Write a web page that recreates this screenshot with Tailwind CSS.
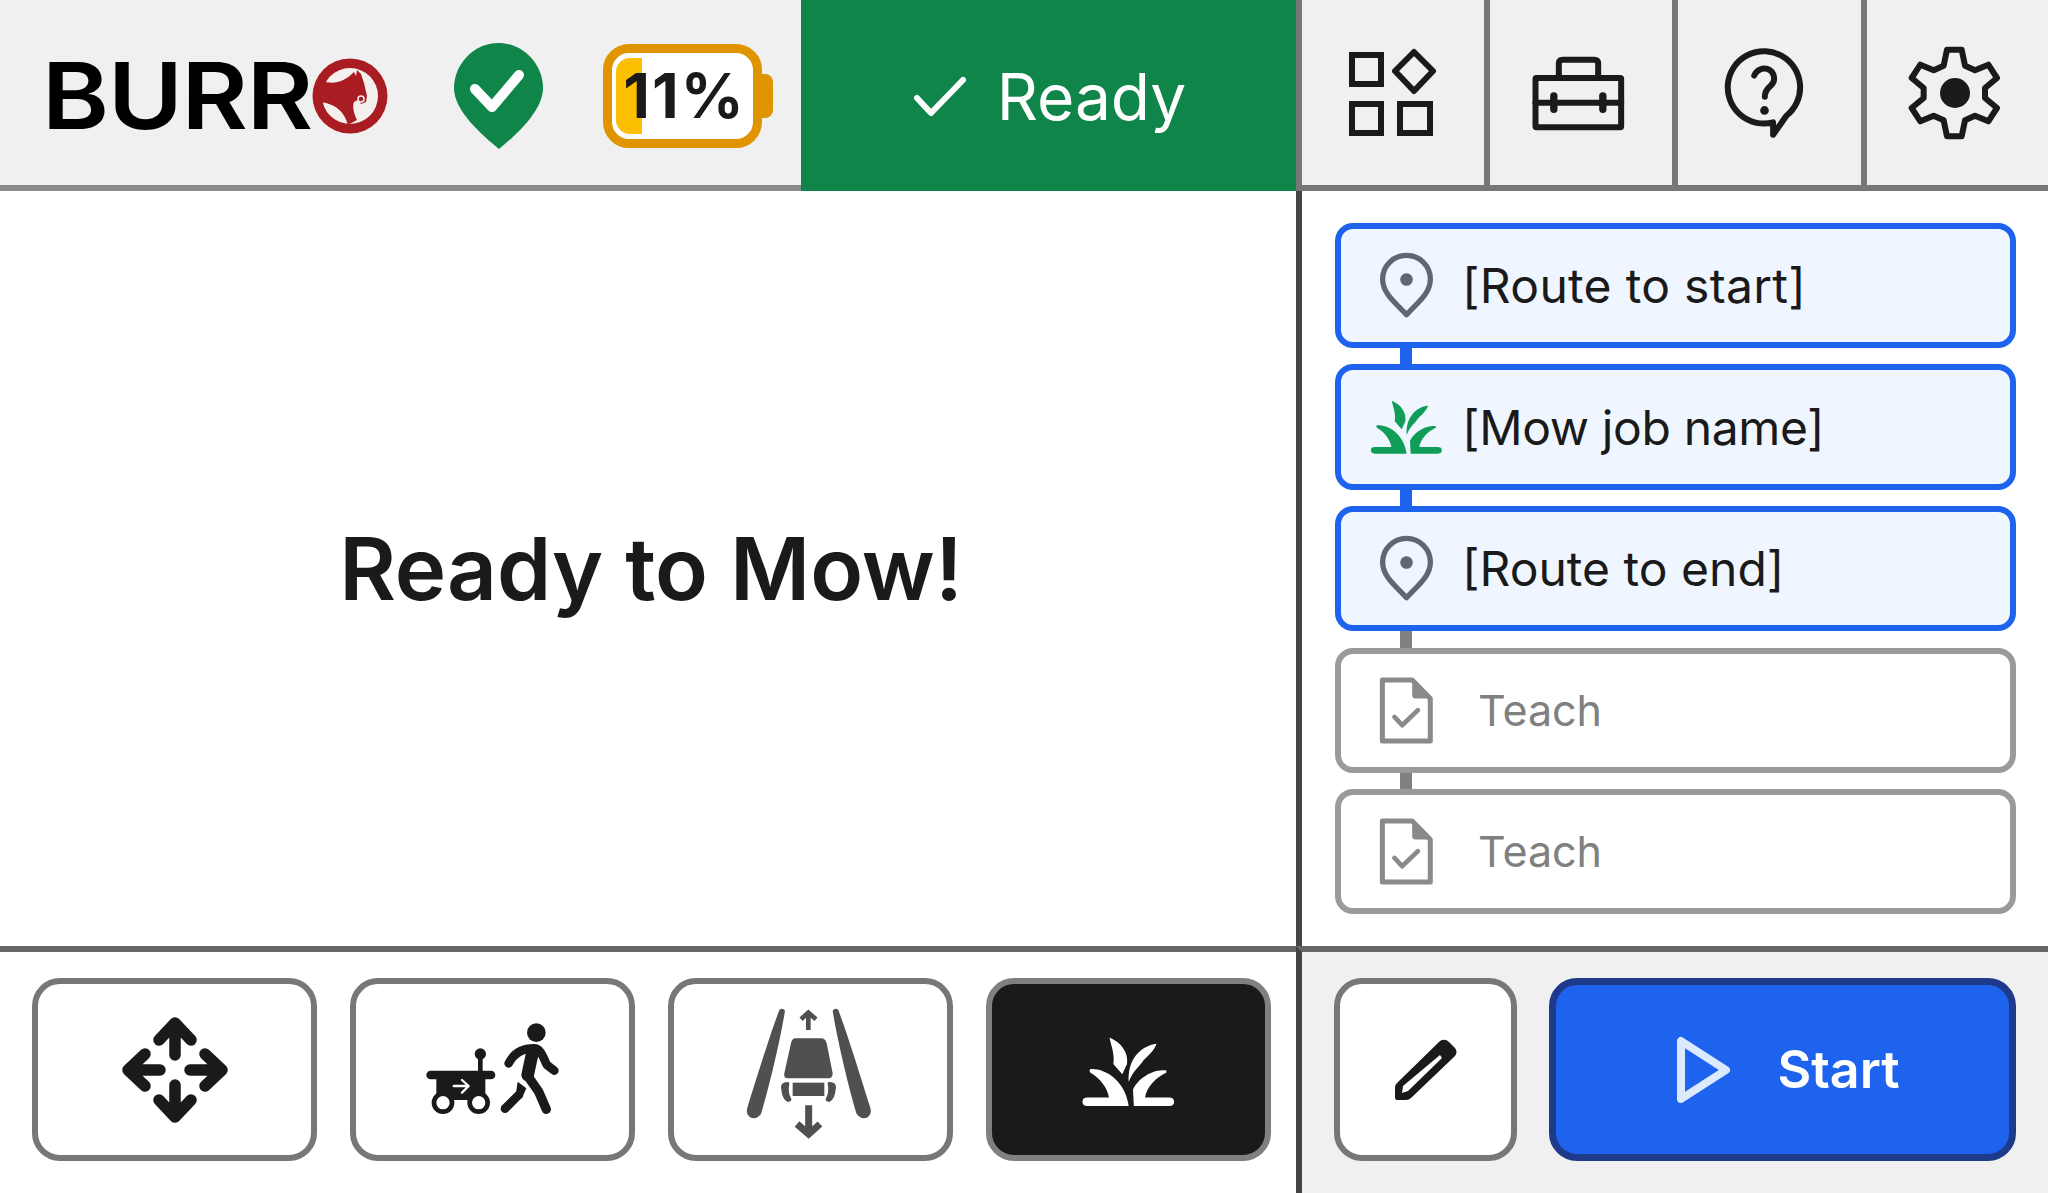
<!DOCTYPE html>
<html lang="en">
  <head>
    <meta charset="UTF-8" />
    <meta name="viewport" content="width=device-width, initial-scale=1.0" />
    <title>Burro</title>
    <script src="https://cdn.jsdelivr.net/npm/@tailwindcss/browser@4"></script>
  </head>
  <body class="bg-white font-['Inter',sans-serif] text-[#1a1a1a]">
    <div class="flex flex-col w-[2048px] h-[1193px] overflow-hidden">
      <!-- Top bar -->
      <header class="flex h-[191px] shrink-0 bg-[#f0f0f0]">
        <div class="flex items-center w-[801px] pl-[42px] border-b-[6px] border-[#8a8a8a]">
          <div class="flex items-center w-[348px] mt-[6px]">
            <span class="inline-block w-[268px] origin-left scale-x-[1.105] font-semibold text-[92px] leading-none tracking-[-1px] text-black">BURR</span>
            <svg class="w-[80px] h-[80px]" viewBox="0 0 80 80">
              <circle cx="40" cy="40" r="37.5" fill="#a81c22" />
              <circle cx="40" cy="40" r="28" fill="#f4f0ee" />
              <path fill="#a81c22" d="M12 25C24 29 34 26 44 16L46 20L47 14L51 18L54 27L57 40L56 46L51 48L48 44L44 46C42 50 44 58 47 64L38 69C35 58 28 48 10 46Z" />
              <circle cx="51" cy="43" r="3" fill="none" stroke="#f4f0ee" stroke-width="1.5" />
            </svg>
          </div>
          <svg class="w-[89px] h-[106px] ml-[64px] mt-[6px]" viewBox="0 0 89 106">
            <path fill="#0f8549" d="M44.5 0C70 0 89 22 89 45C89 68 62 92 45 106C28 92 0 68 0 45C0 22 19 0 44.5 0Z" />
            <path fill="none" stroke="#fff" stroke-width="10" stroke-linecap="round" stroke-linejoin="round" d="M21 46L38 64L65 32" />
          </svg>
          <div class="flex items-center ml-[60px] mt-[6px]">
            <div class="relative flex items-center justify-center w-[159px] h-[104px] pl-[4px] bg-white border-[9px] border-[#e09500] rounded-[26px]">
              <div class="absolute left-[4px] top-[5px] w-[26px] h-[76px] bg-[#fcc000] rounded-l-[14px]"></div>
              <span class="relative font-bold text-[62px] leading-none tracking-[2px]">11%</span>
            </div>
            <div class="w-[11px] h-[44px] bg-[#e09500] rounded-r-[8px]"></div>
          </div>
        </div>
        <div class="flex items-center justify-center gap-[30px] w-[495px] bg-[#0f8549] text-white pl-[2px]">
          <svg class="w-[54px] h-[44px]" viewBox="0 0 54 44">
            <path fill="none" stroke="#fff" stroke-width="6" stroke-linecap="round" stroke-linejoin="round" d="M4 24L18 39L50 6" />
          </svg>
          <span class="mt-[2px] text-[64px] leading-none">Ready</span>
        </div>
        <div class="flex items-center justify-center w-[188px] border-l-[6px] border-b-[6px] border-[#777]">
          <svg class="w-[102px] h-[100px] mr-[5px]" viewBox="1340 44 102 100" fill="none" stroke="#1a1a1a" stroke-width="6">
            <rect x="1352" y="56" width="29" height="29" />
            <rect x="1352" y="105" width="29" height="29" />
            <rect x="1400" y="105" width="30" height="29" />
            <path stroke-linejoin="round" d="M1395 72L1414 53L1433 72L1414 92Z" />
          </svg>
        </div>
        <div class="flex items-center justify-center w-[188px] border-l-[6px] border-b-[6px] border-[#777]">
          <svg class="w-[97px] h-[80px] mr-[6px]" viewBox="60 60 290 240" fill="none" stroke="#1a1a1a" stroke-width="18" stroke-linejoin="round" stroke-linecap="round">
            <rect x="76" y="135" width="257" height="148" rx="3" />
            <path d="M146 135V92Q146 80 158 80H252Q264 80 264 92V135" />
            <path d="M76 209H333" />
            <path stroke-width="22" d="M131 189V229M278 189V229" />
          </svg>
        </div>
        <div class="flex items-center justify-center w-[189px] border-l-[6px] border-b-[6px] border-[#777]">
          <svg class="w-[88px] h-[97px] mr-[11px]" viewBox="630 30 265 290" fill="none" stroke="#1a1a1a" stroke-width="18" stroke-linejoin="round" stroke-linecap="round">
            <path d="M830 245A109 109 0 1 0 790 265L790 302Z" />
            <path d="M733 124C740 105 760 100 772 104C795 112 800 140 782 155C770 165 765 175 765 188" />
            <circle cx="764" cy="229" r="13" fill="#1a1a1a" stroke="none" />
          </svg>
        </div>
        <div class="flex items-center justify-center w-[187px] border-l-[6px] border-b-[6px] border-[#777]">
          <svg class="w-[130px] h-[120px] mr-[4px]" viewBox="0 0 390 360">
            <path fill="none" stroke="#1a1a1a" stroke-width="18" stroke-linejoin="round" d="M168 50H212L222 98L252 112L292 95L318 135L282 165V195L318 225L292 265L252 248L222 262L212 310H168L158 262L128 248L88 265L62 225L98 195V165L62 135L88 95L128 112L158 98Z" />
            <circle cx="192" cy="180" r="45" fill="#1a1a1a" />
          </svg>
        </div>
      </header>

      <!-- Main area -->
      <main class="flex flex-1 min-h-0">
        <div class="flex items-center justify-center w-[1296px] pl-[6px]">
          <h1 class="font-semibold text-[87px] leading-none">Ready to Mow!</h1>
        </div>
        <div class="flex flex-col w-[752px] pt-[32px] pl-[33px] pr-[32px] border-l-[6px] border-[#444]">
          <div class="flex items-center h-[125px] bg-[#eff6ff] border-[6px] border-[#1d63ed] rounded-[18px]">
            <div class="flex justify-center w-[80px] ml-[25px]">
              <svg class="w-[59px] h-[69px]" viewBox="170 120 176 208">
                <path fill="none" stroke="#616770" stroke-width="16" stroke-linejoin="round" d="M258 312C230 280 186 250 186 205A72 72 0 0 1 330 205C330 250 286 280 258 312Z" />
                <circle cx="258" cy="206" r="19" fill="#616770" />
              </svg>
            </div>
            <span class="ml-[16px] text-[48px] leading-none tracking-[0.3px]">[Route to start]</span>
          </div>
          <div class="w-[12px] h-[16px] ml-[65px] bg-[#1d63ed]"></div>
          <div class="flex items-center h-[126px] bg-[#eff6ff] border-[6px] border-[#1d63ed] rounded-[18px]">
            <div class="flex justify-center w-[80px] ml-[25px]">
              <svg class="w-[75px] h-[58px]" viewBox="145 570 225 175" fill="#0f9d58">
                <path d="M168 652C205 650 250 680 258 738H162Q150 738 150 728Q150 718 162 718H212C208 695 190 672 168 660Q165 655 168 652Z" />
                <path d="M346 655C310 650 275 680 268 700L270 738H352Q364 738 364 728Q364 718 352 718H296C300 695 320 672 346 660Z" />
                <path d="M213 578C242 590 258 615 254 640L243 664L222 640C226 620 218 600 213 578Z" />
                <path d="M323 593C285 598 255 630 258 682C268 655 285 645 292 632C305 620 318 608 323 593Z" />
              </svg>
            </div>
            <span class="ml-[16px] mt-[1px] text-[48px] leading-none tracking-[-0.35px]">[Mow job name]</span>
          </div>
          <div class="w-[12px] h-[16px] ml-[65px] bg-[#1d63ed]"></div>
          <div class="flex items-center h-[125px] bg-[#eff6ff] border-[6px] border-[#1d63ed] rounded-[18px]">
            <div class="flex justify-center w-[80px] ml-[25px]">
              <svg class="w-[59px] h-[69px]" viewBox="170 120 176 208">
                <path fill="none" stroke="#616770" stroke-width="16" stroke-linejoin="round" d="M258 312C230 280 186 250 186 205A72 72 0 0 1 330 205C330 250 286 280 258 312Z" />
                <circle cx="258" cy="206" r="19" fill="#616770" />
              </svg>
            </div>
            <span class="ml-[16px] text-[48px] leading-none">[Route to end]</span>
          </div>
          <div class="w-[12px] h-[17px] ml-[65px] bg-[#808080]"></div>
          <div class="flex items-center h-[125px] bg-white border-[6px] border-[#9a9a9a] rounded-[18px]">
            <div class="flex justify-center w-[80px] ml-[25px]">
              <svg class="w-[59px] h-[71px]" viewBox="170 165 176 212" fill="none" stroke="#8a8a8a">
                <path stroke-width="15" stroke-linejoin="round" d="M186 180H275L329 235V362H186Z" />
                <path fill="#8a8a8a" stroke="none" d="M275 175L335 235H285Q275 235 275 225Z" />
                <path stroke-width="14" stroke-linecap="round" stroke-linejoin="round" d="M222 290L245 315L292 270" />
              </svg>
            </div>
            <span class="ml-[32px] text-[43px] leading-none text-[#808080]">Teach</span>
          </div>
          <div class="w-[12px] h-[16px] ml-[65px] bg-[#808080]"></div>
          <div class="flex items-center h-[125px] bg-white border-[6px] border-[#9a9a9a] rounded-[18px]">
            <div class="flex justify-center w-[80px] ml-[25px]">
              <svg class="w-[59px] h-[71px]" viewBox="170 165 176 212" fill="none" stroke="#8a8a8a">
                <path stroke-width="15" stroke-linejoin="round" d="M186 180H275L329 235V362H186Z" />
                <path fill="#8a8a8a" stroke="none" d="M275 175L335 235H285Q275 235 275 225Z" />
                <path stroke-width="14" stroke-linecap="round" stroke-linejoin="round" d="M222 290L245 315L292 270" />
              </svg>
            </div>
            <span class="ml-[32px] text-[43px] leading-none text-[#808080]">Teach</span>
          </div>
        </div>
      </main>

      <!-- Bottom buttons -->
      <footer class="flex h-[247px] shrink-0">
        <div class="flex gap-[33px] w-[1296px] pt-[26px] pl-[32px] border-t-[6px] border-[#666]">
          <button class="flex items-center justify-center w-[285px] h-[183px] bg-white border-[6px] border-[#777] rounded-[28px]">
            <svg class="w-[106px] h-[106px]" viewBox="0 0 106 106" fill="none" stroke="#1a1a1a" stroke-width="11.5" stroke-linecap="round" stroke-linejoin="round">
              <path d="M37 23L53 6L69 23M53 6V38" />
              <path transform="rotate(90 53 53)" d="M37 23L53 6L69 23M53 6V38" />
              <path transform="rotate(180 53 53)" d="M37 23L53 6L69 23M53 6V38" />
              <path transform="rotate(270 53 53)" d="M37 23L53 6L69 23M53 6V38" />
            </svg>
          </button>
          <button class="flex items-center justify-center w-[285px] h-[183px] bg-white border-[6px] border-[#777] rounded-[28px]">
            <svg class="w-[170px] h-[120px]" viewBox="-7 0 510 360" fill="none" stroke-linecap="round" stroke-linejoin="round">
              <rect x="48" y="182" width="207" height="26" rx="13" fill="#1a1a1a" />
              <rect x="78" y="205" width="147" height="65" fill="#1a1a1a" />
              <path stroke="#1a1a1a" stroke-width="14" d="M210 130V185" />
              <circle cx="210" cy="132" r="17" fill="#1a1a1a" />
              <circle cx="98" cy="278" r="27" fill="#fff" stroke="#1a1a1a" stroke-width="14" />
              <circle cx="205" cy="278" r="27" fill="#fff" stroke="#1a1a1a" stroke-width="14" />
              <path stroke="#fff" stroke-width="7" d="M130 228H172M155 210L175 228L155 248" />
              <circle cx="378" cy="68" r="28" fill="#1a1a1a" />
              <path stroke="#1a1a1a" stroke-width="26" d="M284 296L325 255" />
              <path fill="#1a1a1a" d="M322 215L348 235L335 265L315 262Z" />
              <path stroke="#fff" stroke-width="36" d="M350 195L385 245L408 298" />
              <path stroke="#1a1a1a" stroke-width="26" d="M295 160C310 130 335 115 370 115C395 115 400 150 410 165L432 182" />
              <path stroke="#1a1a1a" stroke-width="38" d="M367 125L352 195" />
              <path stroke="#1a1a1a" stroke-width="28" d="M350 195L385 245L408 298" />
            </svg>
          </button>
          <button class="flex items-center justify-center w-[285px] h-[183px] bg-white border-[6px] border-[#777] rounded-[28px]">
            <svg class="w-[150px] h-[140px]" viewBox="0 0 450 420" fill="#505050">
              <path d="M130 30Q140 22 147 32C135 110 100 260 75 342Q60 362 40 350Q28 340 35 320C60 240 100 110 130 30Z" />
              <path transform="translate(437 0) scale(-1 1)" d="M130 30Q140 22 147 32C135 110 100 260 75 342Q60 362 40 350Q28 340 35 320C60 240 100 110 130 30Z" />
              <path fill="none" stroke="#505050" stroke-width="14" d="M217 40V90M195 58L217 38L240 58" />
              <path d="M178 115H255Q268 115 272 130L290 220Q290 235 278 235H155Q142 235 145 220L165 130Q168 115 178 115Z" />
              <rect x="170" y="248" width="95" height="40" />
              <path d="M158 246Q134 246 135 262Q138 300 155 306Q170 305 165 295Q155 280 160 250Z" />
              <path transform="translate(435 0) scale(-1 1)" d="M158 246Q134 246 135 262Q138 300 155 306Q170 305 165 295Q155 280 160 250Z" />
              <path fill="none" stroke="#505050" stroke-width="21" d="M218 316V390M183 372L218 402L252 372" />
            </svg>
          </button>
          <button class="flex items-center justify-center w-[285px] h-[183px] bg-[#1a1a1a] border-[6px] border-[#808080] rounded-[28px]">
            <svg class="w-[97px] h-[75px] mt-[3px]" viewBox="145 570 225 175" fill="#fff">
              <path d="M168 652C205 650 250 680 258 738H162Q150 738 150 728Q150 718 162 718H212C208 695 190 672 168 660Q165 655 168 652Z" />
              <path d="M346 655C310 650 275 680 268 700L270 738H352Q364 738 364 728Q364 718 352 718H296C300 695 320 672 346 660Z" />
              <path d="M213 578C242 590 258 615 254 640L243 664L222 640C226 620 218 600 213 578Z" />
              <path d="M323 593C285 598 255 630 258 682C268 655 285 645 292 632C305 620 318 608 323 593Z" />
            </svg>
          </button>
        </div>
        <div class="flex gap-[32px] w-[752px] pt-[26px] pl-[32px] pr-[32px] bg-[#f0f0f0] border-l-[6px] border-t-[6px] border-l-[#444] border-t-[#666]">
          <button class="flex items-center justify-center w-[183px] h-[183px] bg-white border-[6px] border-[#777] rounded-[28px]">
            <svg class="w-[62px] h-[61px]" viewBox="0 0 62 61">
              <path fill="#1a1a1a" d="M2 44L45 2Q50 -1 54 3L60 9Q63 13 60 17L16 59Q14 61 11 61H2Q0 61 0 58V48Q0 46 2 44Z" />
              <path fill="#fff" d="M45 16L47 19L13 52L7 54L8 47Z" />
            </svg>
          </button>
          <button class="flex flex-1 items-center justify-center gap-[46px] h-[183px] pl-[11px] bg-[#1d63ed] border-[7px] border-[#1e3a8a] rounded-[28px]">
            <svg class="w-[55px] h-[68px]" viewBox="0 0 55 68">
              <path fill="none" stroke="#dbeafe" stroke-width="8" stroke-linejoin="round" d="M5 5V63L50 34Z" />
            </svg>
            <span class="font-semibold text-[52px] leading-none text-white">Start</span>
          </button>
        </div>
      </footer>
    </div>
  </body>
</html>
